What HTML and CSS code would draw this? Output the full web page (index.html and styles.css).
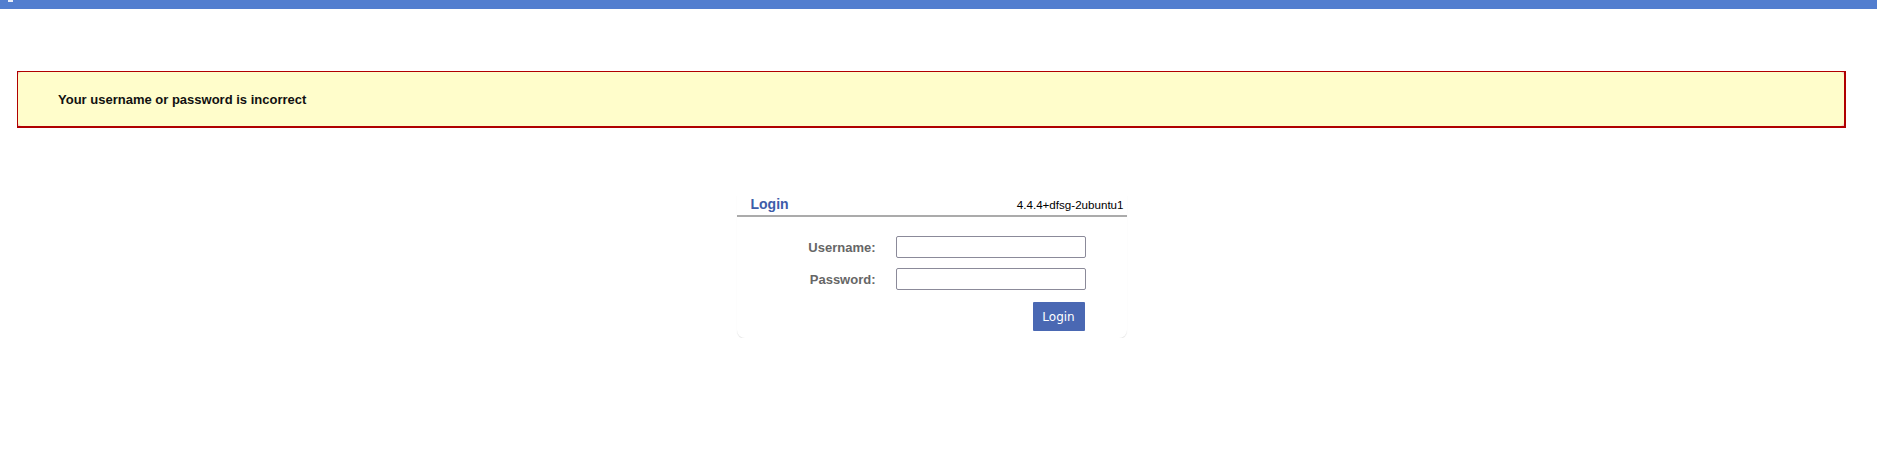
FILE: index.html
```html
<!DOCTYPE html>
<html>
<head>
<meta charset="utf-8">
<title>Login</title>
<link rel="stylesheet" href="styles.css">
</head>
<body>
<div class="topbar"><span class="topbar-mark"></span></div>
<div class="content">
  <div class="alert">
    <div class="alert-inner">Your username or password is incorrect</div>
  </div>
  <div class="panel">
    <div class="panel-head">
      <span class="panel-title">Login</span>
      <span class="panel-version">4.4.4+dfsg-2ubuntu1</span>
    </div>
    <form class="login-form">
      <label class="form-label" for="u">Username:</label>
      <input class="form-input" id="u" type="text">
      <label class="form-label" for="p">Password:</label>
      <input class="form-input" id="p" type="password">
      <div class="form-actions"><button class="btn" type="button">Login</button></div>
    </form>
  </div>
</div>
</body>
</html>
```

FILE: styles.css
```css
html, body {
  margin: 0;
  padding: 0;
  background: #fff;
  font-family: "Liberation Sans", Arial, sans-serif;
}

.topbar {
  height: 9px;
  background: #527ecf;
  padding-left: 8px;
}

.topbar-mark {
  display: block;
  width: 5px;
  height: 2px;
  background: #e8eefa;
}

.content {
  margin: 62px 31px 0 17px;
}

.alert {
  border-top: 1px solid #b00000;
  border-left: 1px solid #b00000;
  border-right: 2px solid #b00000;
  border-bottom: 2px solid #b00000;
  background: #f3c4c4;
}

.alert-inner {
  background: #fffdcb;
  border-radius: 4px;
  height: 54px;
  display: flex;
  align-items: center;
  padding-left: 40px;
  font-size: 13px;
  font-weight: bold;
  color: #111;
}

.panel {
  width: 390px;
  margin: 67px auto 0;
  border-radius: 0 0 8px 8px;
  box-shadow: 0 1px 1px #e4e4e4;
  padding-bottom: 7px;
}

.panel-head {
  display: flex;
  justify-content: space-between;
  align-items: baseline;
  border-bottom: 2px solid #ababab;
  padding: 0 3px 1px 14px;
  line-height: 18px;
}

.panel-title {
  font-size: 14px;
  font-weight: bold;
  color: #3d5ca9;
}

.panel-version {
  font-size: 11.6px;
  color: #000;
}

.login-form {
  display: grid;
  grid-template-columns: 139px 190px;
  column-gap: 20px;
  row-gap: 10px;
  align-items: center;
  margin-top: 19px;
}

.form-label {
  text-align: right;
  font-size: 13px;
  font-weight: bold;
  color: #666;
}

.form-input {
  box-sizing: border-box;
  width: 190px;
  height: 22px;
  margin: 0;
  border: 1px solid #8b8a99;
  border-radius: 2px;
  background: #fff;
  padding: 0 4px;
}

.form-actions {
  grid-column: 2;
  display: flex;
  justify-content: flex-end;
  padding-right: 1px;
  margin-top: 2px;
}

.btn {
  width: 52px;
  height: 29px;
  margin: 0;
  border: none;
  border-radius: 1px;
  background: #4a68b3;
  color: #fff;
  font-family: "DejaVu Sans", sans-serif;
  font-size: 12px;
  padding: 0;
}
```
